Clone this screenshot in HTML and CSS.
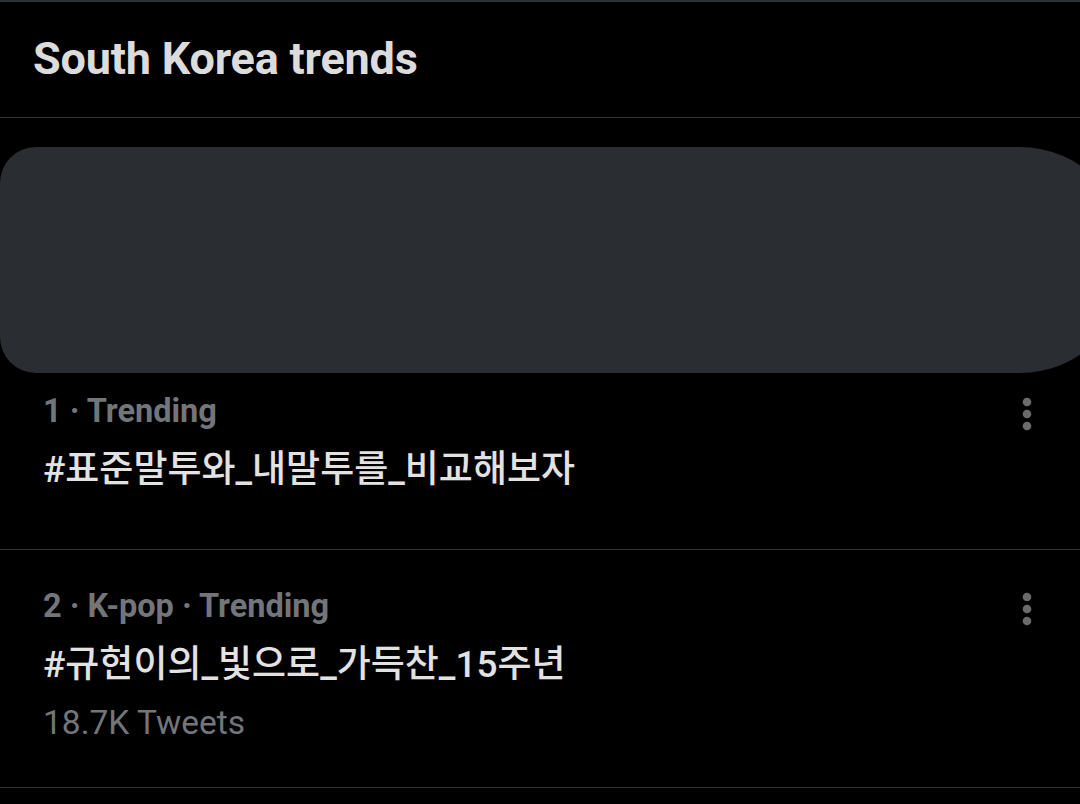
FILE: index.html
```html
<!DOCTYPE html>
<html lang="ko">
<head>
<meta charset="utf-8">
<title>South Korea trends</title>
<link rel="stylesheet" href="styles.css">
</head>
<body>
<div class="page">
  <header class="header">
    <h1 class="title">South Korea trends</h1>
  </header>
  <section class="trend trend-first">
    <div class="redacted"></div>
    <div class="trend-row">
      <div class="trend-body">
        <div class="meta">1 · Trending</div>
        <div class="tag">#표준말투와_내말투를_비교해보자</div>
      </div>
      <svg class="more" width="12" height="34" viewBox="0 0 12 34" aria-hidden="true">
        <circle cx="6" cy="5" r="4.3"/>
        <circle cx="6" cy="17" r="4.3"/>
        <circle cx="6" cy="29" r="4.3"/>
      </svg>
    </div>
  </section>
  <section class="trend trend-second">
    <div class="trend-row">
      <div class="trend-body">
        <div class="meta">2 · K-pop · Trending</div>
        <div class="tag">#규현이의_빛으로_가득찬_15주년</div>
        <div class="count">18.7K Tweets</div>
      </div>
      <svg class="more" width="12" height="34" viewBox="0 0 12 34" aria-hidden="true">
        <circle cx="6" cy="5" r="4.3"/>
        <circle cx="6" cy="17" r="4.3"/>
        <circle cx="6" cy="29" r="4.3"/>
      </svg>
    </div>
  </section>
</div>
</body>
</html>
```

FILE: styles.css
```css
html, body {
  margin: 0;
  padding: 0;
  background: #000;
  overflow: hidden;
}
body {
  width: 1080px;
  height: 804px;
  font-family: Roboto, "Noto Sans CJK KR", sans-serif;
}
.page {
  display: flex;
  flex-direction: column;
  border-top: 2px solid #2f3336;
}
.header {
  height: 116px;
  border-bottom: 1px solid #2f3336;
  display: flex;
  align-items: center;
  padding-left: 33px;
  padding-bottom: 2px;
  box-sizing: border-box;
}
.title {
  margin: 0;
  font-size: 45px;
  font-weight: 700;
  color: #dcdcdc;
  letter-spacing: -0.2px;
}
.trend {
  border-bottom: 1px solid #2f3336;
  display: flex;
  flex-direction: column;
}
.trend-first {
  padding-top: 29px;
  padding-bottom: 54px;
}
.trend-second {
  padding-top: 36px;
  padding-bottom: 44px;
}
.redacted {
  width: 1130px;
  height: 226px;
  background: #2a2e32;
  border-radius: 36px 110px 110px 36px / 36px 113px 113px 36px;
  margin-bottom: 18px;
}
.trend-row {
  display: flex;
  align-items: flex-start;
  padding: 0 47px 0 43px;
}
.trend-body {
  flex: 1;
  display: flex;
  flex-direction: column;
}
.meta {
  font-size: 32.5px;
  line-height: 40px;
  font-weight: 700;
  color: #72767a;
}
.tag {
  margin-top: 14px;
  font-size: 37px;
  line-height: 50px;
  font-weight: 500;
  color: #e2e2e2;
}
.count {
  margin-top: 13px;
  font-size: 33.5px;
  line-height: 40px;
  color: #72767a;
}
.more {
  fill: #6b6b6b;
  margin-top: 6px;
}
```
